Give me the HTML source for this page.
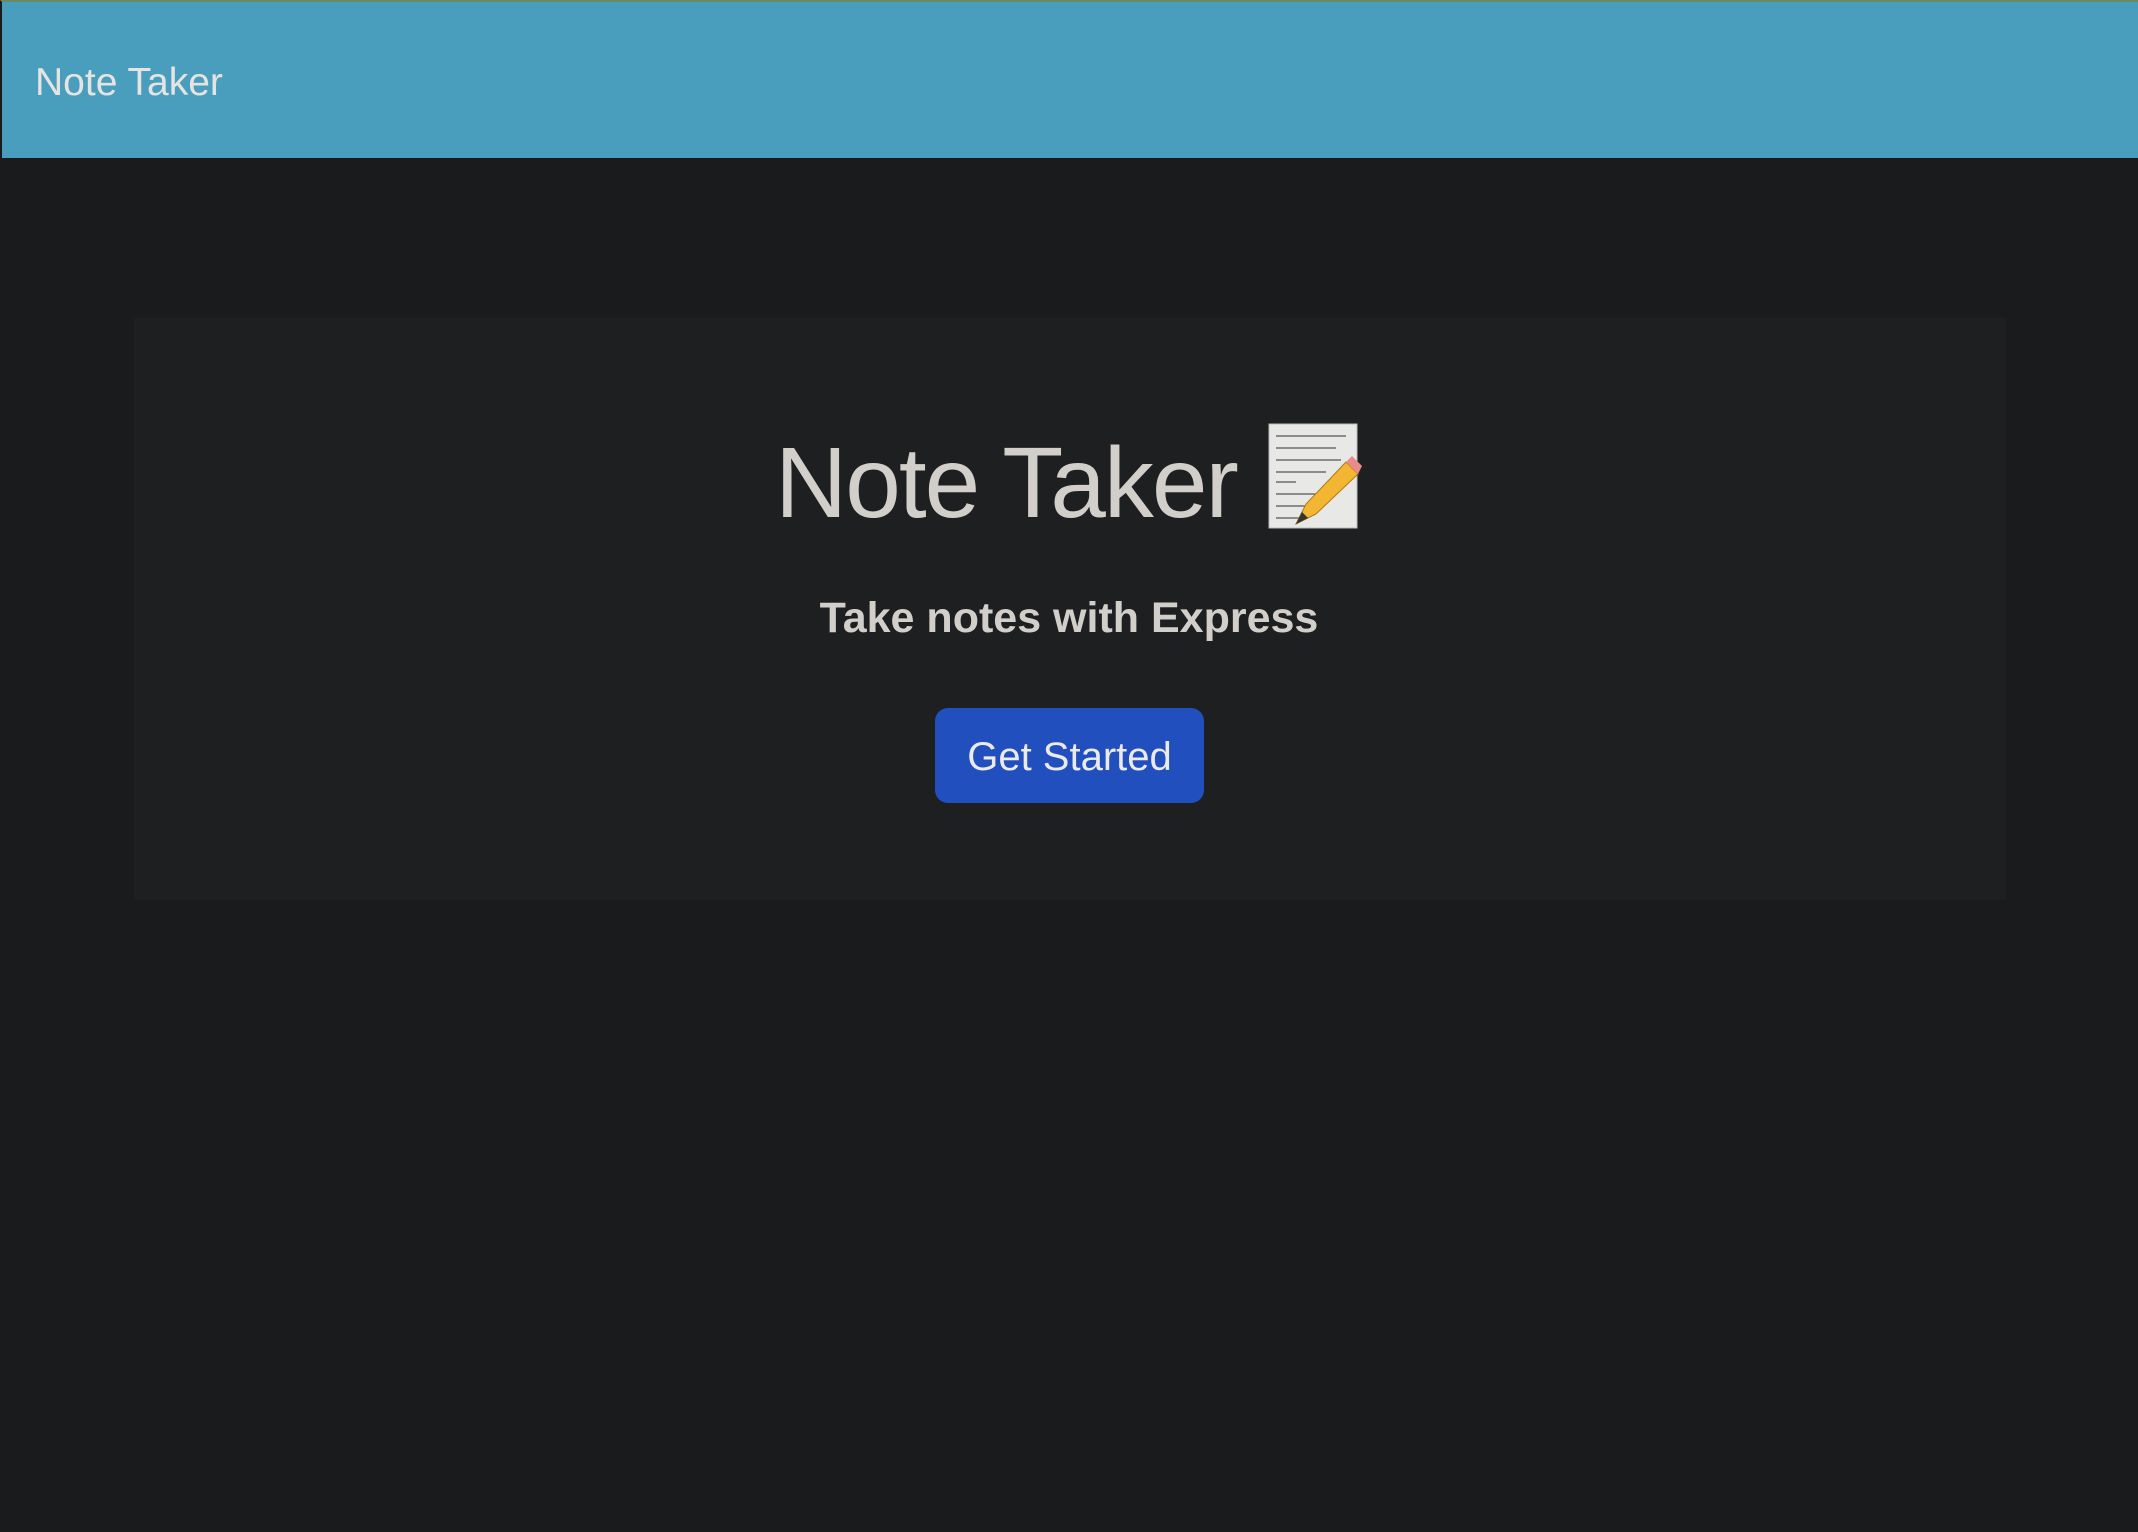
<!DOCTYPE html>
<html><head><meta charset="utf-8"><style>
html,body{margin:0;padding:0;width:2138px;height:1532px;overflow:hidden;background:#1a1b1d;font-family:"Liberation Sans",sans-serif;}
.nav{position:absolute;left:0;top:0;width:2138px;height:158px;background:#4a9ebd;border-top:2px solid #6a8a60;border-left:2px solid #1a1b1d;box-sizing:border-box;}
.nav span{position:absolute;left:33px;top:61px;font-size:39px;color:#e6e4e0;line-height:1;}
.jumbo{position:absolute;left:134px;top:318px;width:1872px;height:582px;background:#1e1f21;}
.t{position:absolute;color:#d2cfca;line-height:1;white-space:nowrap;}
.title{left:775px;top:433px;font-size:100px;letter-spacing:-2px;}
.sub{left:0;width:2138px;text-align:center;top:597px;font-size:43px;font-weight:bold;}
.btn{position:absolute;left:935px;top:708px;width:269px;height:95px;background:#214fbd;border-radius:13px;color:#eceae6;font-size:40px;text-align:center;line-height:98px;}
</style></head><body>
<div class="nav"><span>Note Taker</span></div>
<div class="jumbo"></div>
<div class="t title">Note Taker</div>
<svg style="position:absolute;left:1266px;top:422px" width="96" height="110" viewBox="0 0 96 110">
<rect x="3" y="2" width="88" height="104" fill="#e8e8e6" stroke="#bbb"/>
<g stroke="#555" stroke-width="1.2">
<line x1="10" y1="14" x2="80" y2="14"/><line x1="10" y1="26" x2="70" y2="26"/><line x1="10" y1="38" x2="75" y2="38"/><line x1="10" y1="50" x2="60" y2="50"/><line x1="10" y1="60" x2="30" y2="60"/><line x1="10" y1="72" x2="55" y2="72"/><line x1="10" y1="84" x2="50" y2="84"/><line x1="10" y1="96" x2="40" y2="96"/></g>
<polygon points="30,102 40,82 80,40 92,52 50,92" fill="#f2b632" stroke="#b07a10"/>
<polygon points="80,40 86,34 96,44 92,52" fill="#e88b8b"/>
<polygon points="30,102 36,90 42,96" fill="#333"/>
</svg>
<div class="t sub">Take notes with Express</div>
<div class="btn">Get Started</div>
</body></html>
